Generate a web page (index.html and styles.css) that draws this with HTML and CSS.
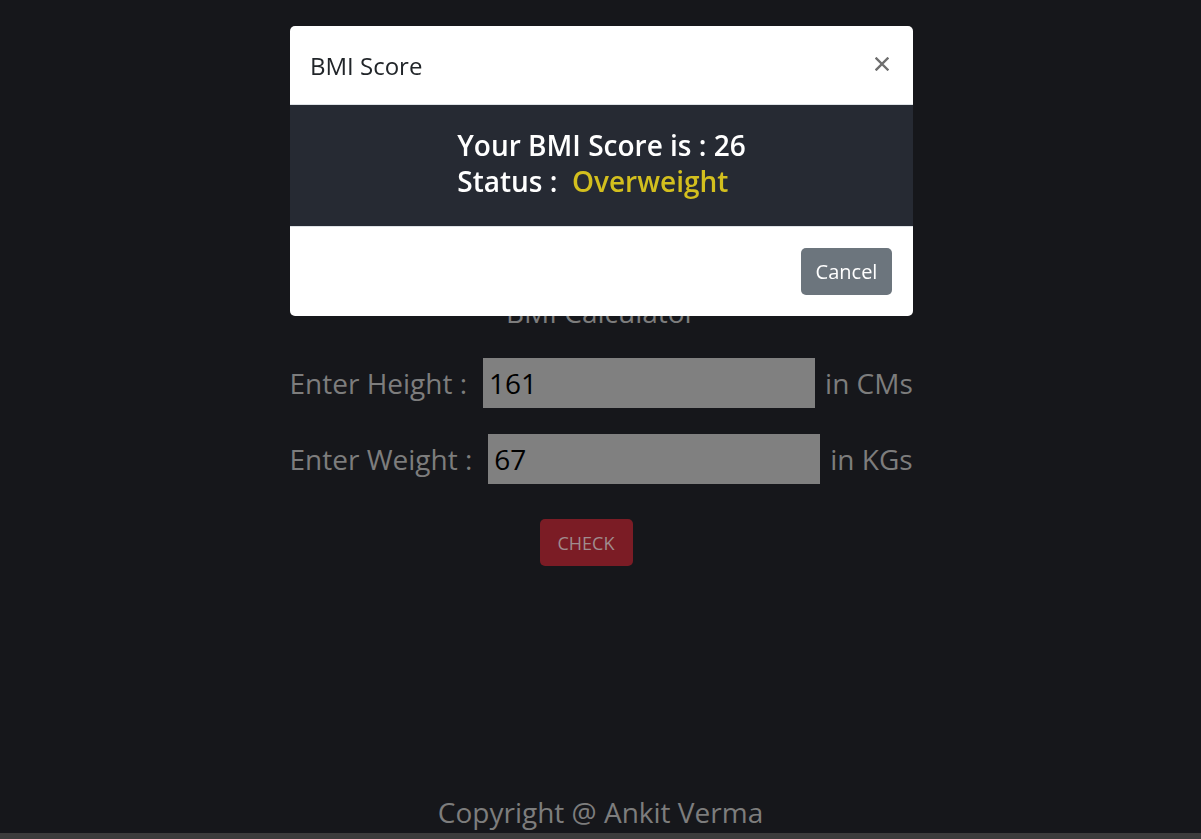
FILE: index.html
```html
<!DOCTYPE html>
<html lang="en">
<head>
<meta charset="utf-8">
<title>BMI Calculator</title>
<link rel="stylesheet" href="styles.css">
</head>
<body>
<div class="page">
  <main class="calc">
    <h1 class="calc-title">BMI Calculator</h1>
    <div class="row">
      <label class="row-label">Enter Height :</label>
      <input class="row-input" type="text" value="161">
      <span class="row-unit">in CMs</span>
    </div>
    <div class="row">
      <label class="row-label">Enter Weight :</label>
      <input class="row-input" type="text" value="67">
      <span class="row-unit">in KGs</span>
    </div>
    <div class="actions">
      <button class="btn-check">CHECK</button>
    </div>
  </main>
  <footer class="footer">Copyright @ Ankit Verma</footer>
  <div class="bottom-bar"></div>
</div>

<div class="overlay">
  <div class="modal">
    <div class="modal-header">
      <h2 class="modal-title">BMI Score</h2>
      <button class="modal-close" aria-label="Close">
        <svg width="14" height="14" viewBox="0 0 14 14"><path d="M1.5 1.5L12.5 12.5M12.5 1.5L1.5 12.5" stroke="#6f6f6f" stroke-width="2.4" stroke-linecap="square"/></svg>
      </button>
    </div>
    <div class="modal-body">
      <div class="result">
        <div>Your BMI Score is : 26</div>
        <div>Status : &nbsp;<span class="status">Overweight</span></div>
      </div>
    </div>
    <div class="modal-footer">
      <button class="btn-cancel">Cancel</button>
    </div>
  </div>
</div>
</body>
</html>
```

FILE: styles.css
```css
html, body {
  margin: 0;
  padding: 0;
  height: 100%;
}
body {
  background: #16171b;
  font-family: "Open Sans", "Noto Sans", sans-serif;
  color: #7d7d7d;
  overflow: hidden;
}
.page {
  height: 839px;
  display: flex;
  flex-direction: column;
}
.calc {
  width: 623px;
  margin: 0 auto;
  padding-top: 290px;
  padding-left: 1px;
}
.calc-title {
  margin: 0 0 24px;
  font-size: 28px;
  font-weight: 400;
  line-height: 44px;
  text-align: center;
  color: #7d7d7d;
}
.row {
  display: flex;
  align-items: center;
  height: 50px;
  margin-bottom: 26px;
  font-size: 28px;
}
.row-label {
  margin-right: 16px;
  white-space: nowrap;
}
.row-input {
  width: 332px;
  height: 50px;
  box-sizing: border-box;
  border: none;
  background: #808080;
  color: #000;
  font-family: inherit;
  font-size: 28px;
  padding: 0 6px;
  margin: 0 10px 0 0;
  outline: none;
}
.row-unit {
  white-space: nowrap;
}
.actions {
  padding-left: 250px;
  padding-top: 9px;
}
.btn-check {
  width: 93px;
  height: 47px;
  border: none;
  border-radius: 5px;
  background: #7b1c25;
  color: #a08c8e;
  font-family: inherit;
  font-size: 18px;
}
.footer {
  margin-top: auto;
  text-align: center;
  font-size: 28px;
  line-height: 40px;
  padding-bottom: 1px;
  color: #7d7d7d;
}
.bottom-bar {
  height: 6px;
  background: #3c3c3c;
}

/* modal */
.overlay {
  position: fixed;
  inset: 0;
  display: flex;
  justify-content: center;
  align-items: flex-start;
  padding-top: 26px;
  padding-left: 2px;
}
.modal {
  width: 623px;
  background: #fff;
  border-radius: 5px;
  overflow: hidden;
}
.modal-header {
  height: 79px;
  box-sizing: border-box;
  display: flex;
  align-items: center;
  justify-content: space-between;
  padding: 0 24px 2px 20px;
  border-bottom: 1px solid #dee2e6;
}
.modal-title {
  margin: 0;
  font-size: 24px;
  font-weight: 400;
  color: #212529;
  padding-top: 2px;
}
.modal-close {
  border: none;
  background: none;
  padding: 0;
  width: 14px;
  height: 14px;
  margin-top: -1px;
  display: block;
}
.modal-close svg { display: block; }
.modal-body {
  background: #262a33;
  height: 122px;
  box-sizing: border-box;
  display: flex;
  justify-content: center;
  align-items: center;
  border-bottom: 1px solid #dee2e6;
}
.result {
  font-size: 28px;
  font-weight: 600;
  line-height: 36px;
  color: #fff;
  padding-bottom: 6px;
}
.status {
  color: #d3bf1e;
}
.modal-footer {
  height: 89px;
  box-sizing: border-box;
  display: flex;
  justify-content: flex-end;
  align-items: center;
  padding: 0 21px 0 0;
}
.btn-cancel {
  width: 91px;
  height: 47px;
  border: none;
  border-radius: 5px;
  background: #6c757d;
  color: #fff;
  font-family: inherit;
  font-size: 20px;
}
```
